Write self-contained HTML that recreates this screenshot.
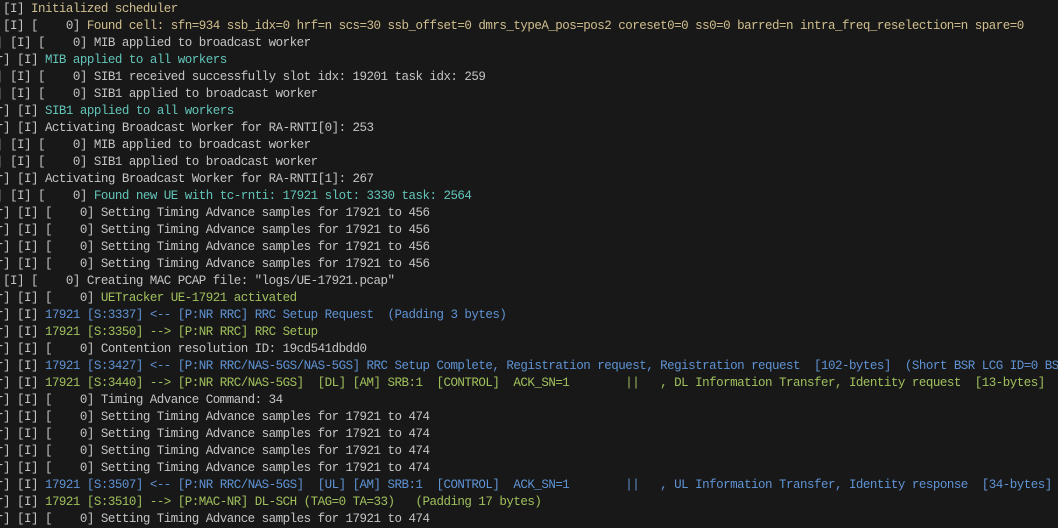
<!DOCTYPE html>
<html><head><meta charset="utf-8"><style>
html,body{margin:0;padding:0;background:#181818;width:1058px;height:514px;overflow:hidden}
pre{margin:0;position:absolute;left:-4px;top:1px;font-family:"Liberation Mono","DejaVu Sans Mono",monospace;font-size:12.5px;letter-spacing:-0.51px;line-height:17px;color:#c4c4c4;white-space:pre}
.y{color:#d0bf8e}.c{color:#62c4b8}.b{color:#5f93d4}.g{color:#a0c05c}
</style></head><body><pre>
 [I] <span class="y">Initialized scheduler</span>
 [I] [    0] <span class="y">Found cell: sfn=934 ssb_idx=0 hrf=n scs=30 ssb_offset=0 dmrs_typeA_pos=pos2 coreset0=0 ss0=0 barred=n intra_freq_reselection=n spare=0</span>
| [I] [    0] MIB applied to broadcast worker
r] [I] <span class="c">MIB applied to all workers</span>
| [I] [    0] SIB1 received successfully slot idx: 19201 task idx: 259
| [I] [    0] SIB1 applied to broadcast worker
r] [I] <span class="c">SIB1 applied to all workers</span>
r] [I] Activating Broadcast Worker for RA-RNTI[0]: 253
| [I] [    0] MIB applied to broadcast worker
| [I] [    0] SIB1 applied to broadcast worker
r] [I] Activating Broadcast Worker for RA-RNTI[1]: 267
| [I] [    0] <span class="c">Found new UE with tc-rnti: 17921 slot: 3330 task: 2564</span>
r] [I] [    0] Setting Timing Advance samples for 17921 to 456
r] [I] [    0] Setting Timing Advance samples for 17921 to 456
r] [I] [    0] Setting Timing Advance samples for 17921 to 456
r] [I] [    0] Setting Timing Advance samples for 17921 to 456
 [I] [    0] Creating MAC PCAP file: "logs/UE-17921.pcap"
r] [I] [    0] <span class="g">UETracker UE-17921 activated</span>
r] [I] <span class="b">17921 [S:3337] &lt;-- [P:NR RRC] RRC Setup Request  (Padding 3 bytes)</span>
r] [I] <span class="g">17921 [S:3350] --&gt; [P:NR RRC] RRC Setup</span>
r] [I] [    0] Contention resolution ID: 19cd541dbdd0
r] [I] <span class="b">17921 [S:3427] &lt;-- [P:NR RRC/NAS-5GS/NAS-5GS] RRC Setup Complete, Registration request, Registration request  [102-bytes]  (Short BSR LCG ID=0 BS</span>
r] [I] <span class="g">17921 [S:3440] --&gt; [P:NR RRC/NAS-5GS]  [DL] [AM] SRB:1  [CONTROL]  ACK_SN=1        ||   , DL Information Transfer, Identity request  [13-bytes]</span>
r] [I] [    0] Timing Advance Command: 34
r] [I] [    0] Setting Timing Advance samples for 17921 to 474
r] [I] [    0] Setting Timing Advance samples for 17921 to 474
r] [I] [    0] Setting Timing Advance samples for 17921 to 474
r] [I] [    0] Setting Timing Advance samples for 17921 to 474
r] [I] <span class="b">17921 [S:3507] &lt;-- [P:NR RRC/NAS-5GS]  [UL] [AM] SRB:1  [CONTROL]  ACK_SN=1        ||   , UL Information Transfer, Identity response  [34-bytes]</span>
r] [I] <span class="g">17921 [S:3510] --&gt; [P:MAC-NR] DL-SCH (TAG=0 TA=33)   (Padding 17 bytes)</span>
r] [I] [    0] Setting Timing Advance samples for 17921 to 474
</pre></body></html>
